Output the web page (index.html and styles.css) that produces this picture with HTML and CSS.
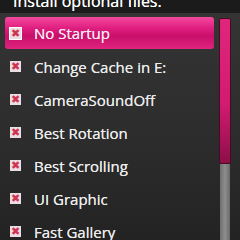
FILE: index.html
```html
<!DOCTYPE html>
<html lang="en">
<head>
    <meta charset="UTF-8">
    <title>Install optional files</title>
    <link rel="stylesheet" href="styles.css">
</head>
<body>
    <div class="header"><div class="title">Install optional files.</div></div>
    <div class="main">
        <ul class="list">
            <li class="item selected"><span class="box">&#x2716;</span>No Startup</li>
            <li class="item"><span class="box">&#x2716;</span>Change Cache in E:</li>
            <li class="item"><span class="box">&#x2716;</span>CameraSoundOff</li>
            <li class="item"><span class="box">&#x2716;</span>Best Rotation</li>
            <li class="item"><span class="box">&#x2716;</span>Best Scrolling</li>
            <li class="item"><span class="box">&#x2716;</span>UI Graphic</li>
            <li class="item"><span class="box">&#x2716;</span>Fast Gallery</li>
        </ul>
        <div class="scrollbar">
            <div class="thumb"></div>
            <div class="track"></div>
        </div>
    </div>
</body>
</html>
```

FILE: styles.css
```css
body {
    margin: 0;
    width: 240px;
    height: 240px;
    overflow: hidden;
    font-family: "Open Sans", sans-serif;
    background: linear-gradient(#353535, #2c2c2c 60%, #232323);
    color: #ececec;
}

.header {
    height: 13px;
    overflow: hidden;
    background-color: #1b1b1b;
}

.title {
    margin-top: -9px;
    padding-left: 13px;
    font-size: 16px;
    line-height: 20px;
    color: #fff;
    text-shadow: 0 0 0.4px #fff;
}

.main {
    display: flex;
    padding-top: 4px;
}

.list {
    list-style: none;
    margin: 0;
    padding: 0 0 0 5px;
    width: 209px;
}

.item {
    display: flex;
    align-items: center;
    height: 33px;
    font-size: 15px;
    padding-left: 5px;
    box-sizing: border-box;
    text-shadow: 0 0 0.4px #ececec;
}

.selected {
    height: 32px;
    margin-bottom: 1px;
    border-radius: 3px;
    background: linear-gradient(#f34a9e, #e01e80 35%, #c8106a 60%, #e0247f);
    color: #fde6f1;
}

.box {
    width: 11px;
    height: 11px;
    margin-right: 13px;
    background-color: #ebdde2;
    color: #cf3350;
    font-size: 11px;
    line-height: 11px;
    text-align: center;
    font-family: "DejaVu Sans", sans-serif;
    text-shadow: none;
    flex: none;
}

.selected .box {
    outline: 1px solid #fff;
}

.scrollbar {
    margin-left: 5px;
    margin-top: 1px;
    width: 12px;
    display: flex;
    flex-direction: column;
}

.thumb {
    height: 146px;
    border: 1px solid #4a0822;
    border-radius: 2px;
    background: linear-gradient(#e0267c, #d11a70 60%, #8d0f48);
    box-sizing: border-box;
}

.track {
    height: 80px;
    margin: 0 1px;
    background: linear-gradient(90deg, #6e6e6e, #8e8e8e 50%, #6a6a6a);
}
```
